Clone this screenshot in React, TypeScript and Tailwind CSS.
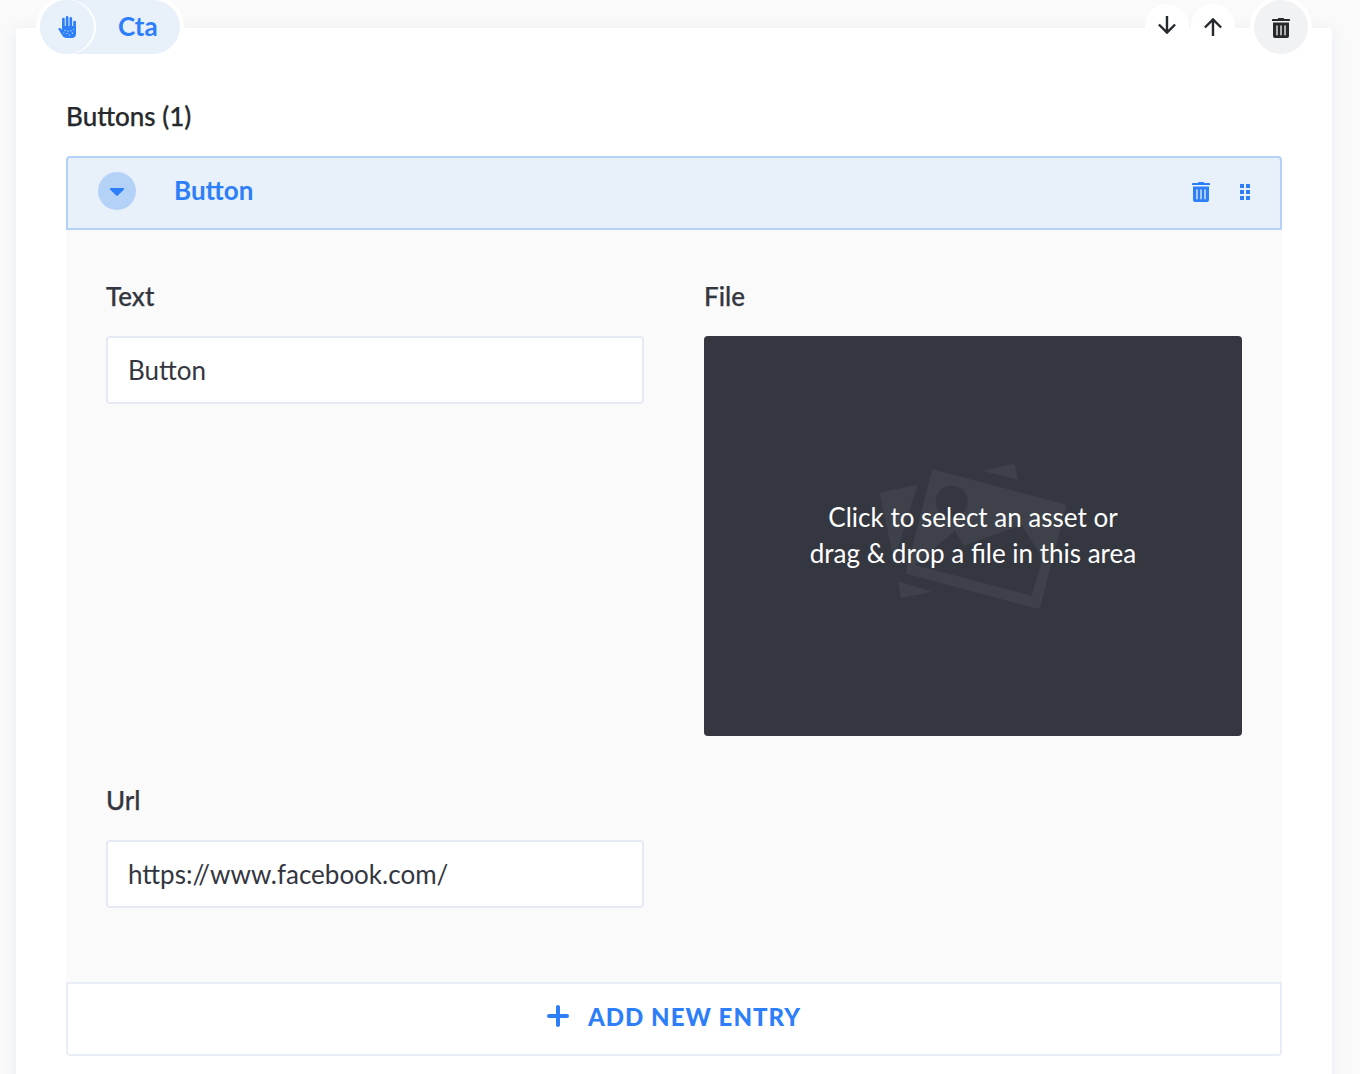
import React from "react";

function Trash({ className }: { className: string }) {
  return (
    <svg viewBox="0 0 18 20" className={className} fill="currentColor">
      <path d="M0 1.8Q0 1 .8 1H6V.6Q6 0 6.6 0h4.8q.6 0 .6.6V1h5.2q.8 0 .8.8V3H0z" />
      <path fillRule="evenodd" d="M1 4.6h16V18q0 2-2 2H3q-2 0-2-2zM4.1 7.4v9.8h1.7V7.4zm4.05 0v9.8h1.7V7.4zm4.05 0v9.8h1.7V7.4z" />
      <path opacity=".25" d="M4.1 7.4h1.7v9.8H4.1zM8.15 7.4h1.7v9.8h-1.7zM12.2 7.4h1.7v9.8h-1.7z" />
    </svg>
  );
}

function Hand() {
  return (
    <svg width="18" height="22" viewBox="0 0 18 22" fill="none">
      <g stroke="currentColor" strokeWidth="2.7" strokeLinecap="round">
        <path d="M5.4 3V12M9.1 1.4V12M12.8 2.4V12M16.6 6V13" />
      </g>
      <path fill="currentColor" d="M.2 12.8c.6-1.2 2-1.1 2.9 0l1 1.2V10H18v7.5q0 4.5-4.5 4.5H9Q5.5 22 4 19z" />
      <g fill="#e8f0fa">
        <circle cx="7" cy="14.4" r=".6" /><circle cx="10" cy="15.2" r=".6" /><circle cx="13" cy="14.8" r=".6" />
        <circle cx="5.8" cy="17" r=".5" /><circle cx="9" cy="17.6" r=".6" /><circle cx="11.6" cy="19" r=".6" />
        <circle cx="15.4" cy="13.3" r=".5" /><circle cx="14.4" cy="17.2" r=".6" />
      </g>
    </svg>
  );
}

function Arrow({ up = false }: { up?: boolean }) {
  return (
    <svg width="18" height="18" viewBox="0 0 18 18" fill="none" stroke="currentColor" strokeWidth="2.4" className={up ? "rotate-180" : ""}>
      <path d="M9 0v16.3M.9 8.5L9 16.6l8.1-8.1" />
    </svg>
  );
}

function Pictures() {
  return (
    <svg width="230" height="190" viewBox="0 0 690 570" fill="#3e4149">
      <path fillRule="evenodd" d="M223 89L612 192Q620 195 618 202L541 500Q538 508 530 506L142 402Q136 399 138 393L215 94Q217 88 223 89zM165 375L515 467L548 355L485 255L312 318L285 272z" />
      <circle cx="275" cy="185" r="48" fill="#353740" />
      <path d="M65 156L172 134L103 362L59 163Q58 158 65 156zM113 422L215 455L128 474Q123 474 122 470zM367 92L458 72Q463 71 465 76L473 120z" />
      <path d="M206 62Q194 64 189 80L104 392Q101 414 122 430M34 138Q24 150 29 172L93 484Q97 498 110 500" fill="none" stroke="#393b44" strokeWidth="2" />
    </svg>
  );
}

function Field({ label, value }: { label: string; value: string }) {
  return (
    <div className="w-[538px]">
      <div className="h-[66px] leading-[52px] font-medium [-webkit-text-stroke:0.25px]">{label}</div>
      <input readOnly value={value} className="block h-[68px] w-full rounded border-2 border-[#e6eaf4] bg-white px-5 outline-none" />
    </div>
  );
}

export default function App() {
  return (
    <div className="h-[1074px] overflow-hidden bg-[#fafafa] pt-7 pr-7 pl-4 font-['Lato',sans-serif] text-[26px] text-[#34363f]">
      <section className="flow-root h-[1100px] rounded-t bg-white px-[50px] shadow-[0_2px_16px_rgba(100,130,200,0.12)]">
        <header className="-mx-[26px] -mt-7 flex h-[54px] items-start justify-between">
          <div className="flex h-[54px] w-[140px] rounded-full bg-[#e8f0fa] text-[#2d7ff9] ring-4 ring-white">
            <span className="flex size-[54px] shrink-0 items-center justify-center rounded-full bg-[#e8f0fa] shadow-[2px_0_0_#fff]"><Hand /></span>
            <span className="pl-6 leading-[52px] font-bold">Cta</span>
          </div>
          <div className="flex text-[#26292b]">
            <button className="mt-1 flex size-11 items-center justify-center rounded-full bg-white pb-0.5"><Arrow /></button>
            <button className="mt-1 mr-[19px] ml-0.5 flex size-11 items-center justify-center rounded-full bg-white pt-0.5"><Arrow up /></button>
            <button className="flex size-[54px] items-center justify-center rounded-full bg-[#f1f2f4] pt-0.5 ring-4 ring-white"><Trash className="h-5 w-[18px]" /></button>
          </div>
        </header>
        <h2 className="mt-9 h-[66px] leading-[52px] font-medium text-[#26292b] [-webkit-text-stroke:0.25px]">Buttons (1)</h2>
        <div className="flex h-[74px] items-center rounded-t border-2 border-[#b4d2f8] bg-[#e8f0fa] pr-7 pl-[30px] text-[#2d7ff9]">
          <span className="mb-1 flex size-[38px] items-center justify-center rounded-full bg-[#b4d2f8]">
            <svg width="14" height="8" viewBox="0 0 14 8" className="mt-0.5" fill="currentColor"><path d="M0 0h14v1.5L7.8 7.6Q7 8.3 6.2 7.6L0 1.5z" /></svg>
          </span>
          <span className="mb-1.5 ml-[38px] font-bold">Button</span>
          <Trash className="mr-[30px] mb-0.5 ml-auto h-5 w-[18px]" />
          <svg width="10" height="16" viewBox="0 0 10 16" className="mr-0.5 mb-0.5" fill="currentColor"><path d="M0 0h4v4H0zM6 0h4v4H6zM0 6h4v4H0zM6 6h4v4H6zM0 12h4v4H0zM6 12h4v4H6z" /></svg>
        </div>
        <div className="grid h-[752px] grid-cols-[538px_538px] grid-rows-[466px_auto] gap-x-[60px] gap-y-[38px] bg-[#fafafa] px-10 pt-10">
          <Field label="Text" value="Button" />
          <div>
            <div className="h-[66px] leading-[52px] font-medium [-webkit-text-stroke:0.25px]">File</div>
            <div className="grid h-[400px] place-items-center rounded bg-[#353740] text-white">
              <div className="col-start-1 row-start-1 pb-0.5 pl-1"><Pictures /></div>
              <p className="z-10 col-start-1 row-start-1 pb-0.5 text-center leading-9">Click to select an asset or<br />drag &amp; drop a file in this area</p>
            </div>
          </div>
          <Field label="Url" value="https://www.facebook.com/" />
        </div>
        <button className="flex h-[74px] w-full items-center justify-center rounded-b border-2 border-[#e9edf5] bg-white pb-1 text-[24px] font-black tracking-[1.03px] text-[#2d7ff9]">
          <svg width="22" height="22" viewBox="0 0 22 22" className="mr-[19px] mb-0.5" stroke="currentColor" strokeWidth="4" strokeLinecap="round"><path d="M11 2v18M2 11h18" /></svg>
          ADD NEW ENTRY
        </button>
      </section>
    </div>
  );
}
